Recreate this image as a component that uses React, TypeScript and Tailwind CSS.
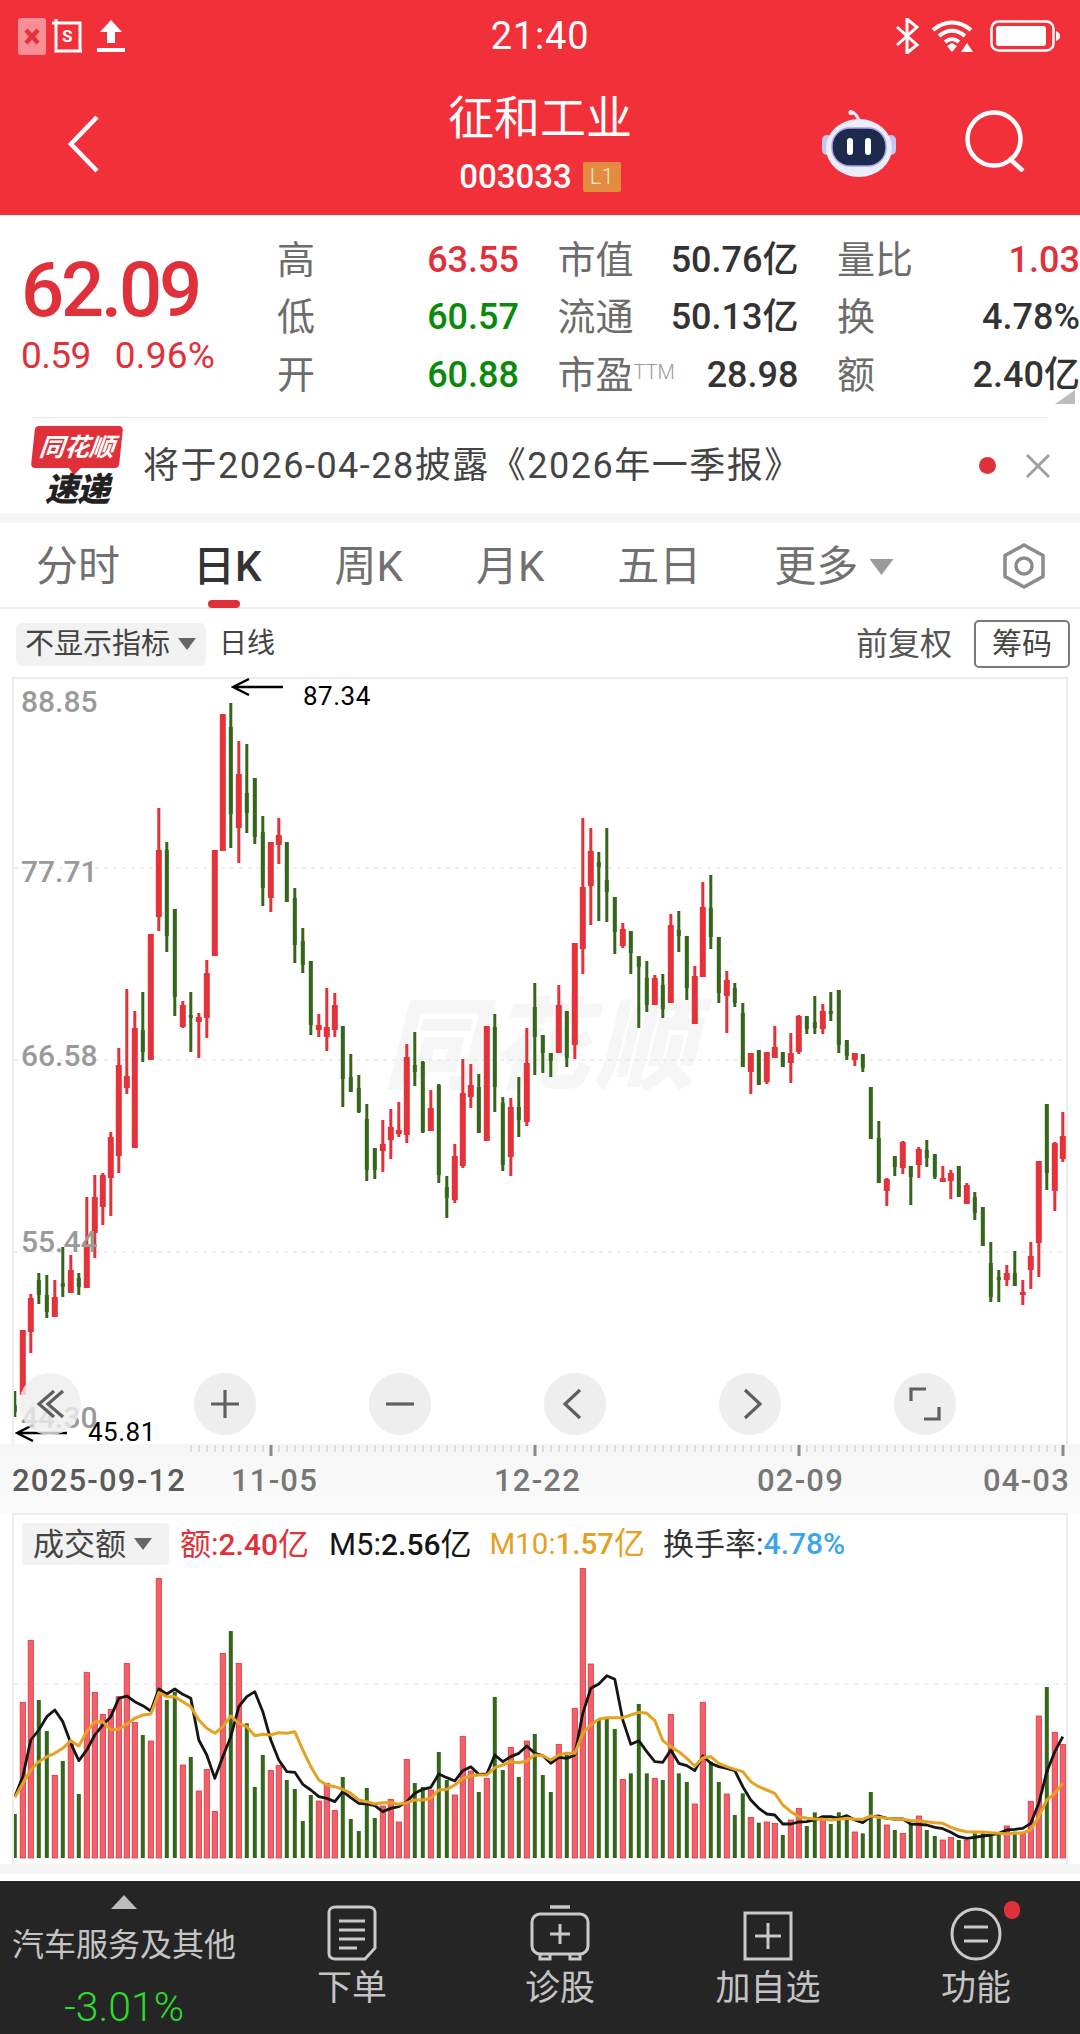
import React from 'react';

type C = [number, number, number, number, 'r' | 'g'];
const candles: C[] = [
[1391,1417,1405,1412,'g'],[1330,1395,1330,1395,'r'],[1294,1353,1298,1332,'r'],[1273,1304,1280,1295,'g'],[1275,1318,1295,1312,'g'],[1280,1317,1297,1317,'r'],[1247,1297,1283,1287,'g'],[1255,1293,1270,1293,'r'],[1273,1295,1278,1287,'g'],[1197,1288,1247,1288,'r'],
[1175,1258,1197,1233,'r'],[1173,1225,1175,1207,'r'],[1132,1216,1137,1178,'r'],[1048,1173,1065,1156,'r'],[989,1094,1076,1088,'r'],[1011,1148,1028,1148,'r'],[992,1062,1030,1052,'g'],[934,1060,934,1060,'r'],[808,931,850,917,'r'],[842,952,850,936,'g'],
[909,1016,909,997,'g'],[1001,1028,1005,1027,'r'],[992,1052,1015,1018,'g'],[1013,1058,1017,1022,'r'],[960,1038,973,1018,'r'],[850,956,850,956,'r'],[714,851,714,851,'r'],[703,848,727,814,'g'],[741,863,774,828,'r'],[744,833,793,813,'g'],
[778,844,778,837,'g'],[816,906,832,888,'g'],[842,912,842,898,'r'],[818,864,835,845,'r'],[842,902,842,902,'g'],[888,963,898,945,'g'],[928,973,941,965,'g'],[961,1035,961,1025,'g'],[1014,1037,1025,1030,'r'],[988,1051,1027,1037,'r'],
[993,1037,1005,1030,'r'],[1027,1107,1026,1079,'g'],[1054,1092,1077,1092,'g'],[1075,1113,1088,1112,'g'],[1104,1181,1119,1170,'g'],[1148,1179,1148,1170,'g'],[1120,1172,1144,1151,'r'],[1109,1159,1127,1140,'r'],[1102,1137,1130,1134,'r'],[1044,1143,1057,1135,'r'],
[1032,1086,1065,1072,'g'],[1061,1133,1062,1132,'g'],[1090,1131,1108,1131,'r'],[1084,1183,1085,1175,'g'],[1176,1218,1187,1198,'g'],[1144,1203,1156,1200,'r'],[1059,1168,1093,1166,'r'],[1064,1108,1085,1097,'r'],[1074,1133,1087,1133,'g'],[1026,1141,1026,1141,'r'],
[1014,1112,1027,1087,'g'],[1097,1171,1103,1165,'g'],[1098,1176,1107,1157,'r'],[1077,1137,1107,1120,'g'],[1028,1126,1063,1122,'r'],[983,1075,1007,1037,'g'],
[1035,1073,1035,1053,'g'],[1053,1077,1053,1061,'g'],[985,1053,1005,1053,'r'],[1011,1067,1011,1058,'g'],[943,1059,943,1045,'r'],[818,974,887,949,'r'],[828,925,851,886,'r'],[852,921,862,867,'g'],[828,922,880,892,'g'],[897,954,897,932,'g'],
[923,948,929,946,'r'],[931,974,931,953,'g'],[956,1028,956,967,'g'],[961,1012,978,1005,'g'],[975,1005,978,1005,'r'],[974,1018,985,1009,'g'],[914,1003,925,1003,'r'],[911,952,930,936,'g'],[936,1000,936,988,'g'],[966,1024,976,1024,'r'],
[882,977,907,977,'r'],[875,949,908,937,'g'],[937,1003,937,993,'g'],[971,1033,980,996,'r'],[983,1007,988,1003,'g'],[1003,1067,1013,1067,'g'],[1053,1094,1053,1072,'r'],[1050,1085,1050,1085,'g'],[1052,1084,1052,1082,'r'],[1026,1058,1047,1058,'r'],
[1052,1067,1052,1067,'g'],[1033,1083,1053,1063,'r'],[1015,1054,1016,1052,'r'],[1016,1034,1016,1029,'g'],[996,1034,1022,1028,'g'],[1004,1034,1011,1029,'r'],[992,1021,1011,1014,'g'],[990,1053,990,1045,'g'],[1040,1060,1040,1056,'g'],[1053,1066,1053,1060,'r'],
[1054,1072,1054,1068,'g'],[1087,1139,1087,1139,'g'],[1121,1183,1138,1183,'g'],[1178,1206,1179,1191,'r'],[1156,1176,1156,1167,'g'],[1141,1174,1142,1168,'r'],[1166,1205,1166,1177,'g'],[1147,1178,1149,1165,'r'],[1140,1167,1150,1158,'g'],[1154,1179,1154,1177,'g'],
[1166,1182,1178,1182,'r'],[1170,1199,1173,1181,'r'],[1166,1197,1166,1197,'g'],[1183,1204,1185,1204,'r'],[1192,1220,1197,1213,'g'],[1207,1246,1207,1246,'g'],[1242,1302,1263,1297,'g'],[1270,1302,1277,1280,'g'],[1265,1286,1273,1280,'r'],[1251,1286,1273,1286,'g'],
[1280,1305,1292,1295,'r'],[1242,1289,1256,1270,'r'],[1161,1277,1161,1243,'r'],[1104,1190,1104,1173,'g'],[1142,1211,1143,1191,'r'],[1112,1162,1136,1159,'r'],
];

const volTops = [942,607,421,600,693,826,783,725,882,517,577,643,628,590,490,667,705,723,235,600,575,795,771,873,808,934,460,393,490,670,861,765,811,796,840,867,963,885,903,850,931,831,957,993,864,954,918,898,966,778,849,861,870,756,840,885,709,813,876,835,591,810,742,831,723,702,825,876,733,765,625,205,492,660,655,687,838,820,612,820,835,840,643,820,846,912,607,785,846,882,945,880,952,968,966,970,1005,960,925,978,937,950,972,937,955,996,1000,876,955,975,990,1000,970,948,990,1008,1020,1012,1020,1020,1000,1000,1000,1000,978,995,1000,904,648,561,697,733];

const ma5 = [890,830,720,690,650,630,665,730,782,750,705,675,650,595,588,605,617,633,567,582,567,583,595,720,765,835,770,710,620,590,575,635,720,780,815,817,853,870,890,895,905,875,893,910,912,917,935,925,920,905,880,868,862,822,833,843,812,800,823,822,765,785,770,760,738,760,767,790,772,775,765,640,565,552,527,538,660,733,722,755,785,787,750,790,797,812,768,790,800,805,812,860,900,925,942,945,972,972,966,965,960,950,950,955,947,960,968,950,948,955,957,957,972,973,975,982,986,997,1010,1015,1012,1008,1005,1000,990,988,985,970,910,815,755,710];
const ma10 = [892,850,810,785,770,760,745,722,738,695,665,665,690,688,672,655,645,642,578,590,590,605,620,660,685,700,680,648,670,680,707,703,705,698,700,695,750,800,840,855,860,868,880,900,905,912,908,908,913,908,900,900,895,870,868,855,835,828,825,825,803,795,785,788,783,765,767,780,765,760,760,700,675,658,653,653,653,645,637,640,662,722,740,755,775,798,773,770,790,800,808,815,845,860,870,880,915,935,950,955,957,958,960,958,955,958,958,948,952,955,957,958,962,962,965,968,970,982,990,995,996,996,998,1000,1002,1000,998,990,950,900,880,850];

const xOf = (i: number) => 14.8 + i * 8;
const vY = (z: number) => 1500 + z / 3;
const RED = '#e5323a';
const GREEN = '#35661b';

function Tri({ className }: { className: string }) {
  return (
    <svg viewBox="0 0 18 12" className={className} fill="currentColor">
      <path d="M0 0h18L9 12z" />
    </svg>
  );
}

function StatusBar() {
  return (
    <div className="grid h-[72px] grid-cols-3 items-center text-white">
      <div className="flex items-center pl-[18px]">
        <svg width="28" height="37" viewBox="0 0 28 37">
          <rect width="28" height="37" rx="3" fill="#f98f95" />
          <path d="M8 12l12 13M20 12L8 25" stroke="#e5323a" strokeWidth="4.5" />
        </svg>
        <svg width="32" height="34" viewBox="0 0 32 34" className="ml-[6px]" fill="none" stroke="#fff">
          <path d="M4 0v32h26M0 4h28v28" strokeWidth="3" />
          <text x="10" y="23" fontSize="17" fill="#fff" stroke="none" fontFamily="Roboto" fontWeight="700">S</text>
        </svg>
        <svg width="28" height="32" viewBox="0 0 28 32" className="ml-[13px]" fill="#fff">
          <path d="M14 0l11 12h-7v11h-8V12H3zM0 28h28v4H0z" />
        </svg>
      </div>
      <div className="text-center text-[38px] leading-none tracking-[0.8px]">21:40</div>
      <div className="flex items-center justify-end pr-[20px]">
        <svg width="24" height="36" viewBox="0 0 24 36" fill="none" stroke="#fff" strokeWidth="3">
          <path d="M2 9l20 18-10 8V1l10 8L2 27" />
        </svg>
        <svg width="46" height="32" viewBox="0 0 46 32" className="ml-[12px]" fill="none" stroke="#fff" strokeWidth="4">
          <path d="M2 10c12-10 26-10 38 0M8 16c8-7 18-7 26 0M14 22c5-4 9-4 14 0" />
          <path d="M16 26l5-3 5 3-5 6z" fill="#fff" stroke="none" />
          <path d="M36 23l6 9H30z" fill="#fff" stroke="none" />
        </svg>
        <svg width="70" height="32" viewBox="0 0 70 32" className="ml-[13px]">
          <rect x="1.5" y="1.5" width="62" height="29" rx="7" fill="none" stroke="#fff" strokeWidth="2.5" />
          <rect x="6" y="6" width="50" height="20" rx="3" fill="#fff" />
          <path d="M66 11c3 1 4 3 4 5s-1 4-4 5z" fill="#fff" />
        </svg>
      </div>
    </div>
  );
}

function NavBar() {
  return (
    <div className="grid h-[143px] grid-cols-[1fr_auto_1fr] items-start">
      <svg width="32" height="58" viewBox="0 0 32 58" className="ml-[67px] mt-[43px]" fill="none" stroke="#fff" strokeWidth="4.5">
        <path d="M30 2L4 29l26 27" />
      </svg>
      <div className="flex flex-col items-center pt-[23px] text-white">
        <div className="text-[46px] leading-[46px]">征和工业</div>
        <div className="mt-[20px] flex items-center">
          <span className="text-[33px] font-medium leading-[32px]">003033</span>
          <span className="ml-[11px] flex h-[30px] w-[38px] items-center justify-center rounded-[2px] bg-[#e38b3f] text-[22px] font-light leading-none text-[#fde9d3]">L1</span>
        </div>
      </div>
      <div className="mr-[53px] mt-[38px] flex items-start justify-end">
        <svg width="74" height="68" viewBox="0 0 74 68">
          <path d="M37 10c-2-3-2-6-7-8" fill="none" stroke="#dfe2ff" strokeWidth="3" />
          <circle cx="29" cy="2.5" r="2.5" fill="#fff" />
          <rect x="0" y="25" width="10" height="20" rx="5" fill="#c6c6f4" />
          <rect x="64" y="25" width="10" height="20" rx="5" fill="#c6c6f4" />
          <ellipse cx="37" cy="38" rx="33" ry="29" fill="#ecedfb" />
          <rect x="10" y="18" width="54" height="38" rx="18" fill="#1e2a4d" stroke="#a9a0f0" strokeWidth="1.5" />
          <rect x="25" y="28" width="6" height="17" rx="3" fill="#fff" />
          <rect x="43" y="28" width="6" height="17" rx="3" fill="#fff" />
        </svg>
        <svg width="62" height="62" viewBox="0 0 62 62" className="ml-[69px]" fill="none" stroke="#fff" strokeWidth="4.5">
          <circle cx="29" cy="29" r="26.5" />
          <path d="M44 48l14 13" />
        </svg>
      </div>
    </div>
  );
}

function Cell({ label, value, color, sup }: { label: string; value: string; color: string; sup?: string }) {
  return (
    <div className="flex h-[57.5px] items-center justify-between whitespace-nowrap">
      <span className="flex items-start text-[38px] leading-none text-[#6c6c6c]">
        {label}
        {sup && <span className="mt-[6px] text-[20px] font-light leading-none text-[#9a9a9a]">{sup}</span>}
      </span>
      <span className={`text-[36px] font-medium leading-none ${color}`}>{value}</span>
    </div>
  );
}

function Stats() {
  const r = 'text-[#e0313a]';
  const g = 'text-[#0a8a0a]';
  const d = 'text-[#333333]';
  return (
    <div className="relative flex h-[202px] overflow-hidden bg-white">
      <div className="flex w-[277px] shrink-0 flex-col pl-[21px] pt-[37px] text-[#e0313a]">
        <div className="text-[76px] font-medium leading-[76px] tracking-[-3.2px]">62.09</div>
        <div className="mt-[8px] flex items-center text-[37px] leading-[40px]">
          <span className="tracking-[-0.6px]">0.59</span>
          <span className="ml-[24px] tracking-[0.2px]">0.96%</span>
        </div>
      </div>
      <div className="grid w-[803px] shrink-0 grid-cols-[242px_241px_243px] content-start gap-x-[38.5px] pt-[16px]">
        <Cell label="高" value="63.55" color={r} />
        <Cell label="市值" value="50.76亿" color={d} />
        <Cell label="量比" value="1.03" color={r} />
        <Cell label="低" value="60.57" color={g} />
        <Cell label="流通" value="50.13亿" color={d} />
        <Cell label="换" value="4.78%" color={d} />
        <Cell label="开" value="60.88" color={g} />
        <Cell label="市盈" sup="TTM" value="28.98" color={d} />
        <Cell label="额" value="2.40亿" color={d} />
      </div>
      <svg width="20" height="14" viewBox="0 0 20 14" className="absolute left-[1055px] top-[175px]">
        <path d="M20 0v14H0z" fill="#bdbdbd" />
      </svg>
    </div>
  );
}

function News() {
  return (
    <div className="flex h-[95px] items-center bg-white pl-[33px]">
      <div className="flex w-[88px] shrink-0 flex-col items-center">
        <div className="relative flex h-[42px] w-[88px] -skew-x-6 items-center justify-center rounded-[4px] bg-[#e0313a] text-[25px] font-bold italic leading-none text-white">
          同花顺
          <span className="absolute bottom-[-7px] left-[38px] h-0 w-0 border-x-[6px] border-t-[7px] border-x-transparent border-t-[#e0313a]" />
        </div>
        <div className="mt-[7px] text-[33px] font-black italic leading-[30px] tracking-[-1px] text-[#222222]">速递</div>
      </div>
      <div className="ml-[22px] whitespace-nowrap text-[36px] leading-none tracking-[1.5px] text-[#444444]">将于2026-04-28披露《2026年一季报》</div>
      <div className="ml-auto mr-[29px] flex items-center">
        <span className="block h-[17px] w-[17px] rounded-full bg-[#e0313a]" />
        <svg width="26" height="26" viewBox="0 0 26 26" className="ml-[29px]" fill="none" stroke="#a0a0a0" strokeWidth="3">
          <path d="M2 2l22 22M24 2L2 24" />
        </svg>
      </div>
    </div>
  );
}

function Tabs() {
  return (
    <div className="relative flex h-[86px] items-center gap-[73px] border-b-2 border-[#ececec] bg-white pl-[36px] pt-[3px] text-[42px] leading-none text-[#707070]">
      <span>分时</span>
      <span className="relative font-medium text-[#333333]">
        日K
        <span className="absolute bottom-[-20px] left-[15px] h-[8px] w-[32px] rounded-full bg-[#e0313a]" />
      </span>
      <span>周K</span>
      <span>月K</span>
      <span>五日</span>
      <span className="flex items-center">
        更多
        <Tri className="ml-[11px] h-[16px] w-[25px] text-[#9a9a9a]" />
      </span>
      <svg width="50" height="50" viewBox="0 0 50 50" className="absolute left-[999px] top-[18px]" fill="none" stroke="#8c8c8c" strokeWidth="3.5">
        <path d="M25 4l19 10.5v21L25 46 6 35.5v-21z" />
        <circle cx="25" cy="25" r="8" />
      </svg>
    </div>
  );
}

function SubBar() {
  return (
    <div className="flex h-[68px] items-center bg-white pl-[16px] pr-[10px] pt-[2px]">
      <div className="flex h-[43px] w-[190px] items-center rounded-[6px] bg-[#f2f2f2] pl-[9px] text-[29px] leading-none text-[#444444]">
        不显示指标
        <Tri className="ml-[8px] h-[12px] w-[18px] text-[#666666]" />
      </div>
      <span className="ml-[13px] text-[28px] leading-none text-[#444444]">日线</span>
      <span className="ml-auto text-[32px] leading-none text-[#555555]">前复权</span>
      <span className="ml-[22px] flex h-[48px] w-[96px] items-center justify-center rounded-[5px] border-2 border-[#7a7a7a] text-[30px] leading-none text-[#444444]">筹码</span>
    </div>
  );
}

function RoundBtn({ children, dim }: { children: React.ReactNode; dim?: boolean }) {
  return (
    <div className={`flex h-[62px] w-[62px] items-center justify-center rounded-full ${dim ? 'bg-[#efeeef]/80' : 'bg-[#efeeef]'}`}>
      <svg width="36" height="36" viewBox="0 0 36 36" fill="none" stroke="#5f5f5f" strokeWidth="3.2">
        {children}
      </svg>
    </div>
  );
}

function Arrow({ className }: { className: string }) {
  return (
    <svg width="52" height="18" viewBox="0 0 52 18" className={className} fill="none" stroke="#000" strokeWidth="2.4">
      <path d="M52 9H2M18 1L2 9l16 8" />
    </svg>
  );
}

function KChart() {
  const grid = [868, 1060, 1252];
  return (
    <div className="relative z-10 h-[767px] border-2 border-b-0 border-[#ececec]">
      <div className="absolute left-[369px] top-[318px] whitespace-nowrap text-[100px] font-black italic leading-none tracking-[6px] text-[#f6f6f6]">同花顺</div>
      <svg className="absolute inset-0" width="1052" height="765" viewBox="14 679 1052 765">
        {grid.map((y) => (
          <line key={y} x1="14" x2="1066" y1={y} y2={y} stroke="#dedede" strokeWidth="1.2" strokeDasharray="4 5" />
        ))}
        {candles.map(([h, l, t, b, k], i) => {
          const col = k === 'r' ? RED : GREEN;
          const w = k === 'r' ? 6 : 4;
          const x = xOf(i);
          return (
            <g key={i} fill={col}>
              <rect x={x - 1.5} y={h} width="3" height={l - h} />
              <rect x={x - w / 2} y={t} width={w} height={Math.max(b - t, 1)} />
            </g>
          );
        })}
      </svg>
      <span className="absolute left-[7px] top-[4px] text-[30px] font-medium leading-[38px] text-[#9a9a9a]">88.85</span>
      <span className="absolute left-[7px] top-[174px] text-[30px] font-medium leading-[38px] text-[#9a9a9a]">77.71</span>
      <span className="absolute left-[7px] top-[358px] text-[30px] font-medium leading-[38px] text-[#9a9a9a]">66.58</span>
      <span className="absolute left-[7px] top-[544px] text-[30px] font-medium leading-[38px] text-[#9a9a9a]">55.44</span>
      <span className="absolute left-[7px] top-[720px] text-[30px] font-medium leading-[38px] text-[#9a9a9a]">44.30</span>
      <Arrow className="absolute left-[217px] top-[-1px]" />
      <span className="absolute left-[289px] top-[2px] text-[26px] leading-[30px] tracking-[0.5px] text-black">87.34</span>
      <Arrow className="absolute left-[1px] top-[745px]" />
      <span className="absolute left-[74px] top-[741px] text-[26px] leading-[24px] tracking-[0.5px] text-black">45.81</span>
      <div className="absolute left-[5px] top-[694px] flex gap-[113px]">
        <RoundBtn dim><path d="M22 5L7 18l15 13M31 5L16 18l15 13" /></RoundBtn>
        <RoundBtn><path d="M18 4v28M4 18h28" /></RoundBtn>
        <RoundBtn><path d="M4 18h28" /></RoundBtn>
        <RoundBtn><path d="M23 4L8 18l15 14" /></RoundBtn>
        <RoundBtn><path d="M13 4l15 14-15 14" /></RoundBtn>
        <RoundBtn><path d="M19 3H4v12M17 33h15V21" /></RoundBtn>
      </div>
    </div>
  );
}

function Axis() {
  const ticks: number[] = [];
  for (let x = 191; x < 1066; x += 8) ticks.push(x);
  const major = [271, 535, 799, 1063];
  return (
    <div className="relative h-[69px] bg-gradient-to-b from-[#f6f6f6] to-[#fbfbfb] text-[31px] font-medium leading-none text-[#777777]">
      <svg className="absolute left-0 top-0" width="1080" height="12" viewBox="0 0 1080 12">
        {ticks.map((x) => (
          <line key={x} x1={x} x2={x} y1="1" y2="8" stroke="#c4c4c4" strokeWidth="1" />
        ))}
        {major.map((x) => (
          <rect key={x} x={x - 1.5} y="1" width="3" height="12" fill="#8a8a8a" />
        ))}
      </svg>
      <div className="flex h-full items-end pb-[17px] pl-[12px] tracking-[1.2px]">
        <span className="w-[219px] shrink-0 text-[#5a5a5a]">2025-09-12</span>
        <span className="w-[263px] shrink-0">11-05</span>
        <span className="w-[263px] shrink-0">12-22</span>
        <span className="w-[226px] shrink-0">02-09</span>
        <span className="shrink-0">04-03</span>
      </div>
    </div>
  );
}

function VolChart() {
  return (
    <div className="relative h-[351px] border-x-2 border-t-2 border-[#ececec] bg-white">
      <svg className="absolute inset-0" width="1052" height="349" viewBox="14 1515 1052 349">
        <line x1="14" x2="1066" y1="1684" y2="1684" stroke="#e2e2e2" strokeWidth="1.2" strokeDasharray="5 5" />
        {volTops.map((t, i) => {
          const y = vY(t);
          const x = xOf(i);
          return candles[i][4] === 'r' ? (
            <rect key={i} x={x - 2.6} y={y} width="5.2" height={1858 - y} fill="#f0626b" stroke={RED} strokeWidth="0.8" />
          ) : (
            <rect key={i} x={x - 2} y={y} width="4" height={1858 - y} fill={GREEN} />
          );
        })}
        <polyline fill="none" stroke="#151515" strokeWidth="2.8" strokeLinejoin="round" points={ma5.map((z, i) => `${xOf(i)},${vY(z)}`).join(' ')} />
        <polyline fill="none" stroke="#e5a11f" strokeWidth="3" strokeLinejoin="round" points={ma10.map((z, i) => `${xOf(i)},${vY(z)}`).join(' ')} />
      </svg>
      <div className="absolute left-[8px] top-[8px] flex items-center whitespace-nowrap text-[31px] leading-none">
        <div className="flex h-[42px] w-[147px] items-center rounded-[4px] bg-[#f2f2f2] pl-[11px] text-[#444444]">
          成交额
          <Tri className="ml-[8px] h-[12px] w-[18px] text-[#666666]" />
        </div>
        <span className="ml-[11px] text-[#e0313a]">额:<span className="text-[30px] font-medium">2.40</span>亿</span>
        <span className="ml-[20px] text-[#151515]">M5:<span className="text-[30px] font-medium">2.56</span>亿</span>
        <span className="ml-[18px] text-[29.5px] text-[#e5a11f]">M10:<span className="font-medium">1.57</span><span className="text-[31px]">亿</span></span>
        <span className="ml-[18px] text-[#333333]">换手率:</span>
        <span className="text-[30px] font-medium text-[#3aa5e8]">4.78%</span>
      </div>
    </div>
  );
}

function BottomBar() {
  const stroke = '#c9c9c9';
  const items: [string, React.ReactNode][] = [
    ['下单', <svg key="a" width="50" height="56" viewBox="0 0 50 56" fill="none" stroke={stroke} strokeWidth="3"><path d="M8 2h34c3 0 6 2 6 5v36L38 54H8c-3 0-6-2-6-5V7c0-3 3-5 6-5z" /><path d="M12 16h26M12 25h26M12 34h26M12 43h18" /></svg>],
    ['诊股', <svg key="b" width="60" height="56" viewBox="0 0 60 56" fill="none" stroke={stroke} strokeWidth="3"><path d="M20 2h20" strokeWidth="3.5" /><rect x="2" y="9" width="56" height="40" rx="8" /><path d="M30 19v20M20 29h20" /><path d="M10 50v4h10v-4M40 50v4h10v-4" /></svg>],
    ['加自选', <svg key="c" width="50" height="50" viewBox="0 0 50 50" fill="none" stroke={stroke} strokeWidth="3"><rect x="2" y="2" width="46" height="46" /><path d="M25 12v26M12 25h26" /></svg>],
    ['功能', <svg key="d" width="52" height="54" viewBox="0 0 52 54" fill="none" stroke={stroke} strokeWidth="3"><ellipse cx="26" cy="27" rx="24" ry="25" /><path d="M14 20h24M14 34h24" /></svg>],
  ];
  return (
    <div className="flex h-[153px] bg-[#252525] text-[#c4c4c4]">
      <div className="flex w-[248px] shrink-0 flex-col items-center pt-[14px]">
        <svg width="26" height="14" viewBox="0 0 26 14"><path d="M13 0l13 14H0z" fill="#bdbdbd" /></svg>
        <div className="mt-[20px] text-[32px] leading-none">汽车服务及其他</div>
        <div className="mt-[26px] text-[41px] font-light leading-none text-[#2bdc2b]">-3.01%</div>
      </div>
      {items.map(([label, icon], i) => (
        <div key={label} className="relative flex w-[208px] flex-col items-center">
          <div className="flex h-[80px] items-end">{icon}</div>
          <div className="mt-[10px] text-[35px] leading-none">{label}</div>
          {i === 3 && <span className="absolute left-[132px] top-[20px] h-[18px] w-[16px] rounded-full bg-[#e0313a]" />}
        </div>
      ))}
    </div>
  );
}

export default function App() {
  return (
    <div className="h-[2034px] w-[1080px] overflow-hidden bg-white [font-family:Roboto,'Noto_Sans_CJK_SC',sans-serif]">
      <div className="h-[215px] bg-[#f1303a]">
        <StatusBar />
        <NavBar />
      </div>
      <Stats />
      <div className="mx-[32px] h-[1px] bg-[#e8e8e8]" />
      <News />
      <div className="h-[10px] bg-[#f5f5f5]" />
      <Tabs />
      <SubBar />
      <div className="pl-[12px] pr-[12px]">
        <KChart />
      </div>
      <Axis />
      <div className="pl-[12px] pr-[12px]">
        <VolChart />
      </div>
      <div className="h-[10px] bg-[#f5f5f5]" />
      <div className="h-[7px] bg-white" />
      <BottomBar />
    </div>
  );
}
